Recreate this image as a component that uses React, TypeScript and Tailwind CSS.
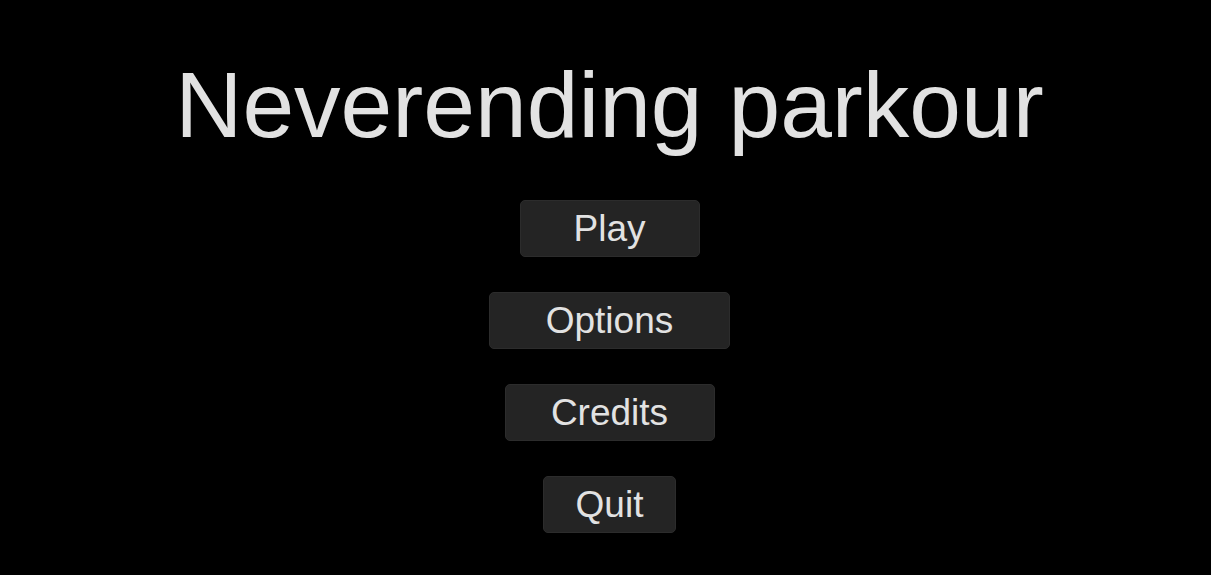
const BUTTONS = [
  { label: 'Play', width: 'w-[180px]' },
  { label: 'Options', width: 'w-[241px]' },
  { label: 'Credits', width: 'w-[210px]' },
  { label: 'Quit', width: 'w-[133px]' },
];

export default function App() {
  return (
    <div className="h-[575px] w-full bg-black font-['Liberation_Sans',Arial,sans-serif] text-[#e2e2e2]">
      <div className="flex flex-col items-center pl-[8px] pt-[59px]">
        <h1 className="text-[93px] font-normal leading-none">Neverending parkour</h1>

        <div className="mt-[48px] flex flex-col items-center gap-[35px]">
          {BUTTONS.map((b) => (
            <button
              key={b.label}
              type="button"
              className={`flex h-[57px] ${b.width} items-center justify-center rounded-[5px] border border-[#2c2c2c] bg-[#242424] text-[37px] leading-none text-[#e2e2e2]`}
            >
              {b.label}
            </button>
          ))}
        </div>
      </div>
    </div>
  );
}
